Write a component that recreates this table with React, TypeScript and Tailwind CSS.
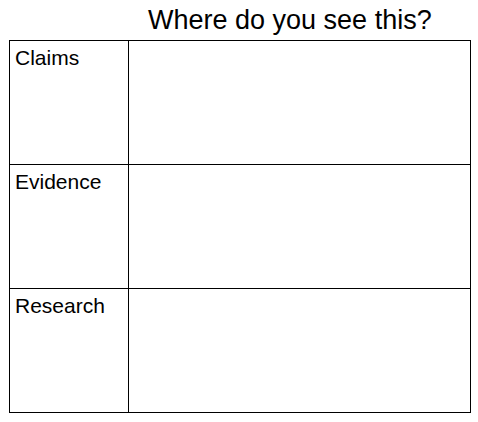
export default function App() {
  const rows = ["Claims", "Evidence", "Research"];
  return (
    <div className="w-[478px] h-[422px] bg-white text-black font-['Liberation_Sans',Arial,sans-serif]">
      <div className="h-[40px] pl-[148px] pt-[7px] text-[27px] leading-[27px]">
        Where do you see this?
      </div>
      <div className="ml-[9px] w-[462px] grid grid-cols-[119px_342px] border-l border-t border-black">
        {rows.map((label) => (
          <div key={label} className="contents">
            <div className="h-[124px] border-r border-b border-black pl-[5px] pt-[5px] text-[21px] leading-[24px]">
              {label}
            </div>
            <div className="h-[124px] border-r border-b border-black" />
          </div>
        ))}
      </div>
    </div>
  );
}
